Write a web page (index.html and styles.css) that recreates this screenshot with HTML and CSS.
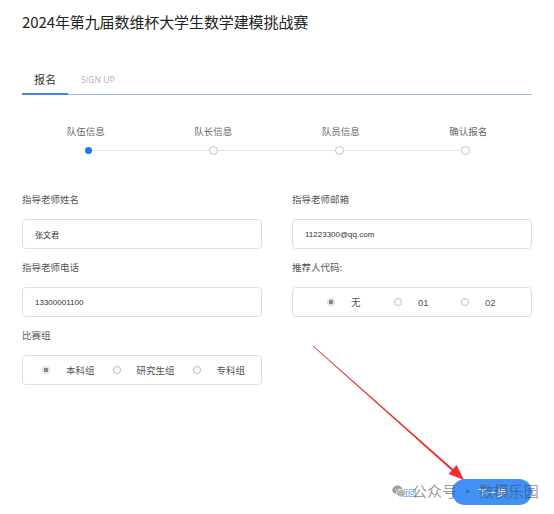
FILE: index.html
```html
<!DOCTYPE html>
<html lang="zh">
<head>
<meta charset="utf-8">
<title>报名</title>
<link rel="stylesheet" href="styles.css">
</head>
<body>
<div class="page">
  <h1 class="title">2024年第九届数维杯大学生数学建模挑战赛</h1>

  <div class="tabs">
    <div class="tab active">报名</div>
    <div class="tab en">SIGN UP</div>
  </div>

  <div class="steps">
    <div class="step-labels">
      <span>队伍信息</span>
      <span>队长信息</span>
      <span>队员信息</span>
      <span>确认报名</span>
    </div>
    <div class="track">
      <span class="dot active"></span>
      <span class="dot"></span>
      <span class="dot"></span>
      <span class="dot"></span>
    </div>
  </div>

  <div class="form">
    <div class="field">
      <div class="label">指导老师姓名</div>
      <div class="input">张文君</div>
    </div>
    <div class="field">
      <div class="label">指导老师邮箱</div>
      <div class="input">11223300@qq.com</div>
    </div>
    <div class="field">
      <div class="label">指导老师电话</div>
      <div class="input">13300001100</div>
    </div>
    <div class="field">
      <div class="label">推荐人代码:</div>
      <div class="input radios spread">
        <span class="radio"><i class="circle checked"></i>无</span>
        <span class="radio"><i class="circle"></i>01</span>
        <span class="radio"><i class="circle"></i>02</span>
      </div>
    </div>
    <div class="field">
      <div class="label">比赛组</div>
      <div class="input radios">
        <span class="radio"><i class="circle checked"></i>本科组</span>
        <span class="radio"><i class="circle"></i>研究生组</span>
        <span class="radio"><i class="circle"></i>专科组</span>
      </div>
    </div>
  </div>

  <div class="footer">
    <a class="back">返回</a>
    <button class="next">下一步</button>
  </div>
</div>

<svg class="arrow" width="554" height="514" viewBox="0 0 554 514">
  <polygon points="313,346.5 313.6,346 456.5,472 455,473.5" fill="#ee2e2e"/>
  <polygon points="464,480 448.6,474 456.6,465" fill="#ee2e2e"/>
</svg>

<div class="watermark">
  <svg class="wx" width="14" height="13" viewBox="0 0 14 13">
    <ellipse cx="5.5" cy="5" rx="5.2" ry="4.4" fill="#9a9a9a"/>
    <ellipse cx="9" cy="8.2" rx="4.6" ry="3.9" fill="#b5b5b5" stroke="#fff" stroke-width="0.8"/>
    <circle cx="3.7" cy="4.2" r="0.7" fill="#fff"/>
    <circle cx="7.2" cy="4.2" r="0.7" fill="#fff"/>
  </svg>
  <span>公众号 · 数模乐园</span>
</div>
</body>
</html>
```

FILE: styles.css
```css
* { box-sizing: border-box; }

html, body {
  margin: 0;
  padding: 0;
  background: #fff;
}

body {
  width: 554px;
  height: 514px;
  overflow: hidden;
  position: relative;
  font-family: "Noto Sans CJK SC", "Noto Sans", sans-serif;
  color: #333;
}

.page {
  padding: 10px 22px 0 22px;
}

.title {
  margin: 0;
  font-size: 15px;
  line-height: 24px;
  font-weight: 400;
  color: #222;
  letter-spacing: -0.1px;
}

.tabs {
  margin-top: 32px;
  display: flex;
  border-bottom: 1px solid #9db9ef;
  height: 29px;
}

.tab {
  padding: 0 12px;
  height: 29px;
  line-height: 27px;
  font-size: 11px;
  color: #333;
}

.tab.active {
  border-bottom: 2px solid #3d86f2;
}

.tab.en {
  padding-left: 13px;
  font-family: "Open Sans", "Liberation Sans", sans-serif;
  font-size: 8.5px;
  color: #b3b3b3;
  letter-spacing: 0.1px;
}

.steps {
  margin-top: 28px;
}

.step-labels {
  display: grid;
  grid-template-columns: repeat(4, 1fr);
  text-align: center;
  font-size: 9.5px;
  line-height: 16px;
  color: #666;
}

.track {
  margin: 6px 62px 0 63px;
  height: 10px;
  display: flex;
  justify-content: space-between;
  align-items: center;
  background: linear-gradient(#e2e2e2, #e2e2e2) center / 100% 1px no-repeat;
}

.dot {
  width: 9px;
  height: 9px;
  border-radius: 50%;
  border: 1px solid #c4c4c4;
  background: #fff;
}

.dot.active {
  width: 7px;
  height: 7px;
  border: none;
  background: #1677ff;
}

.form {
  margin-top: 36px;
  display: grid;
  grid-template-columns: 240px 240px;
  column-gap: 30px;
  row-gap: 10px;
}

.label {
  font-size: 9.5px;
  line-height: 16px;
  color: #555;
  margin-bottom: 12px;
}

.input {
  height: 30px;
  border: 1px solid #dedede;
  border-radius: 4px;
  padding: 0 12px;
  display: flex;
  align-items: center;
  font-family: "Liberation Sans", "Noto Sans CJK SC", sans-serif;
  font-size: 8px;
  color: #333;
}

.radios {
  padding-left: 19px;
  padding-right: 0;
  gap: 18px;
  font-family: "Noto Sans CJK SC", "Liberation Sans", sans-serif;
  font-size: 9.5px;
  color: #555;
}

.radio {
  display: flex;
  align-items: center;
  gap: 16px;
  flex-shrink: 0;
}

.radios.spread {
  padding-left: 34px;
  gap: 0;
}

.radios.spread .radio {
  width: 67px;
  gap: 16px;
  font-family: "Liberation Sans", "Noto Sans CJK SC", sans-serif;
}

.circle {
  display: block;
  width: 8px;
  height: 8px;
  border-radius: 50%;
  border: 1px solid #bdbdbd;
  background: #fff;
  flex-shrink: 0;
}

.circle.checked {
  border-color: #d0d0d0;
  background: radial-gradient(circle, #8a8a8a 0 2.2px, #fff 2.6px);
}

.footer {
  margin-top: 94px;
  display: flex;
  justify-content: flex-end;
  align-items: center;
  gap: 36px;
}

.back {
  font-size: 8px;
  color: #3d86f2;
}

.next {
  width: 80px;
  height: 26px;
  border: none;
  border-radius: 13px;
  background: #4190f5;
  color: #fff;
  font-family: "Noto Sans CJK SC", sans-serif;
  font-size: 9.5px;
  padding: 0;
}

.arrow {
  position: absolute;
  left: 0;
  top: 0;
  pointer-events: none;
}

.watermark {
  position: absolute;
  left: 392px;
  top: 481px;
  display: flex;
  align-items: center;
  gap: 6px;
  font-size: 15px;
  line-height: 20px;
  color: rgba(70, 70, 70, 0.55);
  pointer-events: none;
}
```
